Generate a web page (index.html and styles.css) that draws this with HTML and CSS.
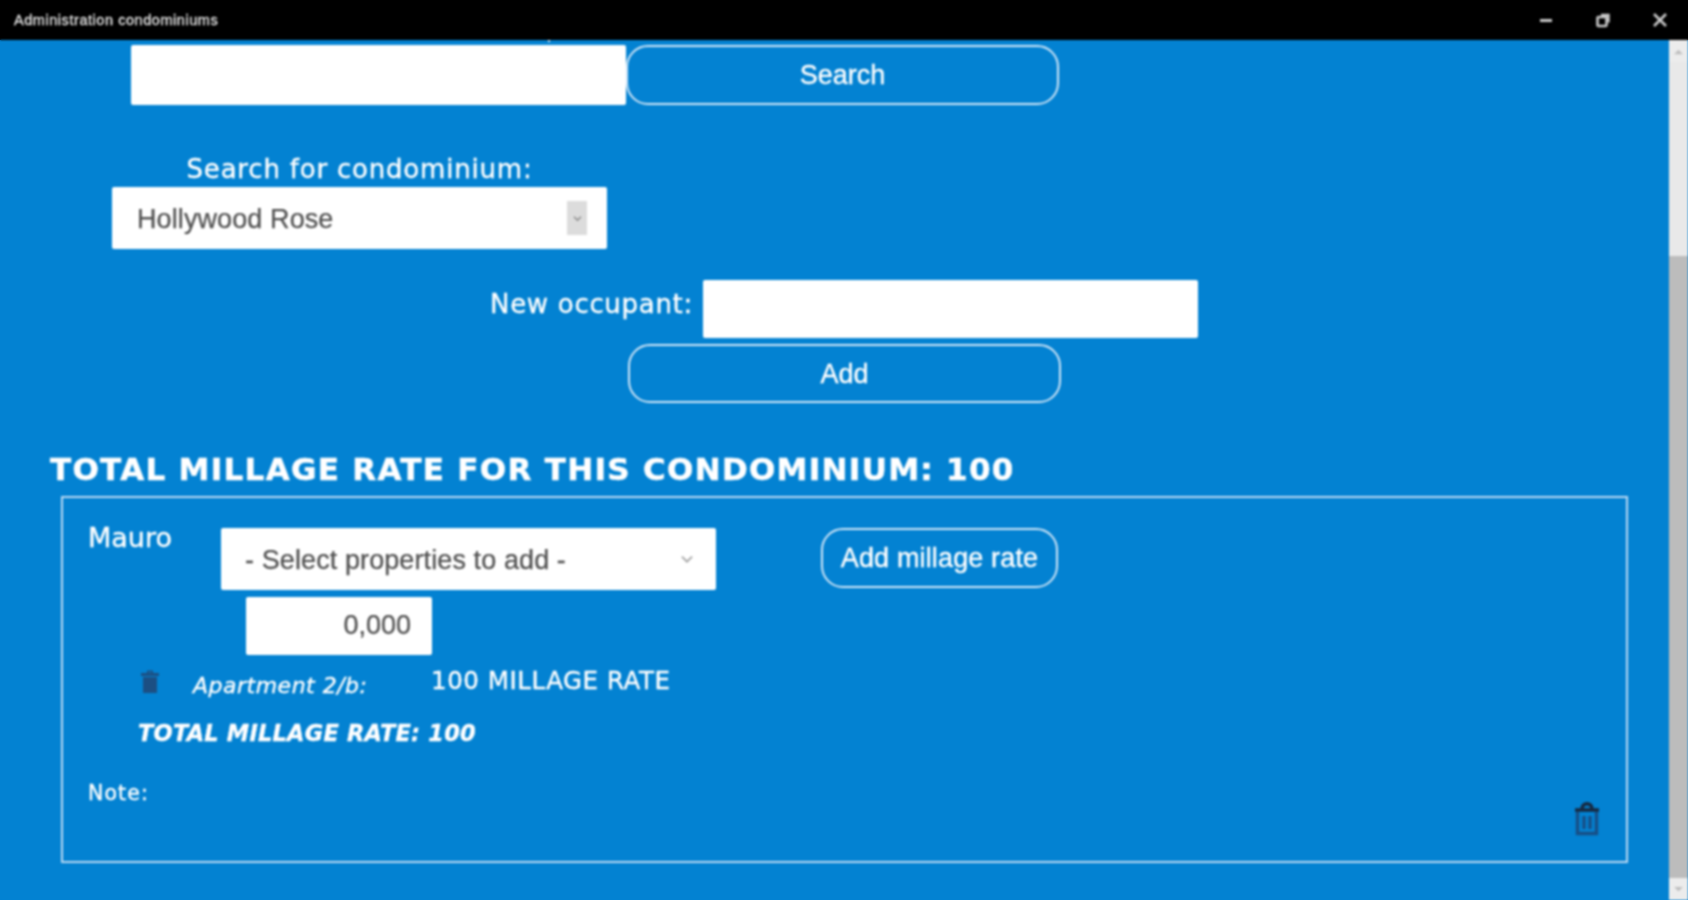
FILE: index.html
```html
<!DOCTYPE html>
<html lang="en">
<head>
<meta charset="utf-8">
<title>Administration condominiums</title>
<link rel="stylesheet" href="styles.css">
</head>
<body>
<div class="app">
  <header class="titlebar">
    <span class="app-title">Administration condominiums</span>
    <div class="window-controls">
      <svg class="win-icon" viewBox="0 0 16 16"><path d="M2 8.5h12" stroke-width="3"/></svg>
      <svg class="win-icon" viewBox="0 0 16 16"><rect x="2.5" y="5" width="9" height="9" rx="1" stroke-width="2.6"/><path d="M6 3h7.5v7.5" stroke-width="2.4"/></svg>
      <svg class="win-icon" viewBox="0 0 16 16"><path d="M2 2l12 12M14 2L2 14" stroke-width="2.6"/></svg>
    </div>
  </header>
  <div class="workspace">
    <main class="content">
      <span class="clipped-mark"></span>
      <section class="search-row">
        <input class="field field-search" type="text" aria-label="Search">
        <button class="pill pill-search">Search</button>
      </section>

      <section class="condo-block">
        <label class="condo-label">Search for condominium:</label>
        <div class="dropdown dropdown-condo">
          <span>Hollywood Rose</span>
          <span class="drop-btn"><svg class="chev" viewBox="0 0 12 8"><path d="M2 2l4 4 4-4"/></svg></span>
        </div>
      </section>

      <section class="occupant-row">
        <label class="occupant-label">New occupant:</label>
        <input class="field field-occupant" type="text" aria-label="New occupant">
      </section>
      <button class="pill pill-add">Add</button>

      <h1 class="total-heading">TOTAL MILLAGE RATE FOR THIS CONDOMINIUM: 100</h1>

      <section class="occupant-card">
        <div class="card-top">
          <span class="occupant-name">Mauro</span>
          <div class="dropdown dropdown-props">
            <span>- Select properties to add -</span>
            <svg class="chev chev-wide" viewBox="0 0 12 8"><path d="M1.5 1.5L6 6l4.5-4.5"/></svg>
          </div>
          <button class="pill pill-rate">Add millage rate</button>
        </div>
        <input class="field field-rate" type="text" value="0,000" aria-label="Millage rate">
        <div class="property-row">
          <svg class="trash trash-small" viewBox="0 0 20 26"><path class="trash-solid" d="M1 5h18v3H1zM7 5V2.500h6V5h-2V4H9v1zM3 9h14v16H3z"/></svg>
          <em class="property-name">Apartment 2/b:</em>
          <span class="property-value">100 MILLAGE RATE</span>
        </div>
        <div class="card-total">TOTAL MILLAGE RATE: 100</div>
        <div class="note-row">
          <span class="note-label">Note:</span>
          <svg class="trash trash-large" viewBox="0 0 28 34"><path class="trash-lid" d="M2 8h24M9 7c0-7 10-7 10 0"/><path class="trash-body" d="M4.500 10v21.500h19V10M11 14v13M17 14v13"/></svg>
        </div>
      </section>
    </main>
    <aside class="scrollbar" aria-hidden="true">
      <div class="scroll-btn"><svg viewBox="0 0 12 8"><path d="M1 7l5-5 5 5z"/></svg></div>
      <div class="scroll-track"></div>
      <div class="scroll-thumb"></div>
      <div class="scroll-btn"><svg viewBox="0 0 12 8"><path d="M1 1l5 5 5-5z"/></svg></div>
    </aside>
  </div>
</div>
</body>
</html>
```
FILE: styles.css
```css
* { box-sizing: border-box; }
html, body { margin: 0; height: 100%; overflow: hidden; }
body { background: linear-gradient(#000 40px, #0382d2 40px); font-family: "Liberation Sans", Arial, sans-serif; color: #fff; }
.app { width: 1688px; height: 900px; display: flex; flex-direction: column; filter: blur(0.8px); }

.titlebar { height: 40px; flex: none; background: #000; display: flex; align-items: center; justify-content: space-between; padding: 0 0 0 14px; }
.app-title { font-size: 14.5px; color: #e8e8e8; letter-spacing: 0.55px; -webkit-text-stroke: 0.3px #e8e8e8; }
.window-controls { display: flex; gap: 41px; padding-right: 20px; }
.win-icon { width: 16px; height: 16px; fill: none; stroke: #c9c9c9; }

.workspace { flex: 1; display: flex; min-height: 0; }
.content { flex: 1; min-width: 0; position: relative; overflow: hidden; background: #0382d2; -webkit-text-stroke: 0.35px #fff; }
.clipped-mark { position: absolute; left: 548px; top: 0; width: 2px; height: 2px; background: #dfeefa; }
.scrollbar { width: 19px; flex: none; display: flex; flex-direction: column; background: #e9e9e9; }
.scroll-btn { height: 22px; flex: none; display: flex; align-items: center; justify-content: center; background: #ececec; }
.scroll-btn svg { width: 11px; height: 7px; fill: #bdbdbd; }
.scroll-track { height: 194px; flex: none; background: #e9e9e9; }
.scroll-thumb { flex: 1; background: #bcbcbc; }

.field { display: block; background: #fff; border: 0; border-radius: 2px; outline: 0; font-family: inherit; color: #505050; -webkit-text-stroke: 0.25px #505050; }
.pill { display: block; background: transparent; border: 2.5px solid #cfe5f7; color: #fff; font-family: "Liberation Sans", Arial, sans-serif; padding-top: 2px; }

.search-row { display: flex; margin: 5px 0 0 131px; }
.field-search { width: 495px; height: 60px; }
.pill-search { width: 433px; height: 60px; border-radius: 22px; font-size: 27px; }

.condo-block { width: 495px; margin: 50px 0 0 112px; }
.condo-label { display: block; height: 32px; line-height: 29px; text-align: center; font-family: "DejaVu Sans", Verdana, sans-serif; font-size: 26px; letter-spacing: 0.8px; }
.dropdown { background: #fff; border-radius: 2px; color: #505050; -webkit-text-stroke: 0.25px #505050; display: flex; align-items: center; justify-content: space-between; font-size: 27px; letter-spacing: 0.1px; padding-top: 2px; }
.dropdown-condo { height: 62px; padding-left: 25px; padding-right: 20px; }
.drop-btn { width: 20px; height: 34px; margin-top: -2px; background: #dcdcdc; display: flex; align-items: center; justify-content: center; }
.chev { width: 11px; height: 7px; fill: none; stroke: #8a8a8a; stroke-width: 1.6; }
.chev-wide { width: 14px; height: 9px; margin-top: -2px; stroke: #a5a5a5; }

.occupant-row { display: flex; margin: 31px 0 0 490px; }
.occupant-label { width: 213px; height: 48px; line-height: 48px; font-family: "DejaVu Sans", Verdana, sans-serif; font-size: 26px; letter-spacing: 0.7px; white-space: nowrap; }
.field-occupant { width: 495px; height: 58px; }
.pill-add { width: 433px; height: 59px; margin: 6px 0 0 628px; border-radius: 22px; font-size: 27px; }

.total-heading { margin: 46px 0 0 50px; height: 40px; line-height: 40px; font-family: "DejaVu Sans", Verdana, sans-serif; font-size: 31px; font-weight: 700; white-space: nowrap; letter-spacing: 1.3px; -webkit-text-stroke: 0.5px #fff; }

.occupant-card { width: 1567px; height: 367px; margin: 7px 0 0 61px; border: 2.5px solid #b9d8f2; padding: 30px 0 0 25px; display: flex; flex-direction: column; }
.card-top { display: flex; align-items: flex-start; }
.occupant-name { width: 133px; font-family: "DejaVu Sans", Verdana, sans-serif; font-size: 27px; line-height: 20px; }
.dropdown-props { width: 495px; height: 62px; padding-left: 24px; padding-right: 22px; }
.pill-rate { width: 237px; height: 60px; margin-left: 105px; border-radius: 22px; font-size: 27px; letter-spacing: 0.15px; }
.field-rate { width: 186px; height: 58px; margin: 7px 0 0 158px; padding: 0 21px 2px; text-align: right; font-size: 27px; }

.property-row { display: flex; align-items: flex-start; height: 60px; margin: 5px 0 0 52px; }
.trash { flex: none; }
.trash-small { width: 20px; height: 26px; margin-top: 8px; }
.trash-solid { fill: #1c4f83; stroke: none; }
.property-name { margin-left: 33px; margin-top: 13px; width: 238px; font-family: "DejaVu Sans", Verdana, sans-serif; font-size: 22px; line-height: 26px; letter-spacing: 0.5px; }
.property-value { margin-top: 8px; font-family: "DejaVu Sans", Verdana, sans-serif; font-size: 24.5px; line-height: 26px; white-space: nowrap; letter-spacing: 0.55px; }
.card-total { margin: 0 0 0 50px; font-family: "DejaVu Sans", Verdana, sans-serif; font-size: 22.5px; line-height: 26px; font-weight: 700; font-style: italic; letter-spacing: 0.2px; }

.note-row { display: flex; justify-content: space-between; align-items: flex-start; margin-top: 34px; padding-right: 25px; }
.note-label { font-family: "DejaVu Sans", Verdana, sans-serif; font-size: 20.5px; line-height: 26px; letter-spacing: 1.1px; }
.trash-large { width: 28px; height: 34px; margin-top: 22px; fill: none; }
.trash-lid { stroke: #17283f; stroke-width: 3.4; fill: none; }
.trash-body { stroke: #174f86; stroke-width: 3.4; fill: none; }
```
